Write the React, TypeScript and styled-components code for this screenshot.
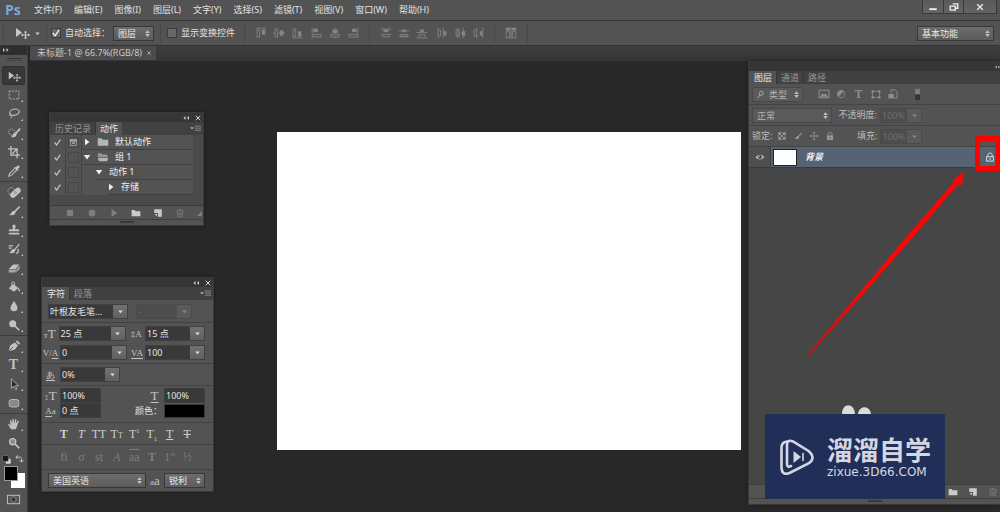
import React from 'react';
import styled, { createGlobalStyle, css } from 'styled-components';

const GlobalStyle = createGlobalStyle`
  * { box-sizing: border-box; }
  body {
    margin: 0;
    background: #282828;
    overflow: hidden;
  }
  body, button, input, select {
    font-family: "Noto Sans", "Noto Sans CJK SC", sans-serif;
    font-size: 9px;
    line-height: 12px;
  }
  body { color: #e2e2e2; }
  button {
    padding: 0;
    border: 0;
    background: none;
    color: inherit;
  }
`;

/* ---------- icons ---------- */

const line = { fill: 'none', stroke: 'currentColor', strokeWidth: 1 };

const glyphs: Record<string, React.ReactNode> = {
  move: <><path d="M2 3v9l6-4.5z" fill="currentColor" /><path d="M11.5 6v8M7.500 10h8M10.500 7.500l1-1.500 1 1.500M10.500 12.500l1 1.500 1-1.500M9 9l-1.500 1L9 11M14 9l1.500 1-1.500 1" {...line} /></>,
  marquee: <rect x="2.500" y="3.500" width="11" height="9" strokeDasharray="2 1.500" {...line} />,
  lasso: <><ellipse cx="8.500" cy="6" rx="5.500" ry="3.500" transform="rotate(-12 8.500 6)" {...line} strokeWidth="1.300" /><path d="M4 8c-1.500.5-1.500 2 0 2s1.500 1.500.5 3" {...line} /></>,
  quick: <><circle cx="5.500" cy="7" r="3.500" strokeDasharray="1.500 1.200" {...line} /><path d="M15 3L9.500 9" {...line} strokeWidth="2" /><path d="M10 8c-2-.5-3 1-4 3.500-.5 1-1.500 1-1.500 1 3 1 6.500.2 6.500-3z" fill="currentColor" /></>,
  crop: <path d="M4.500 1v10.500H15M1 4.500h10.500V15M6 10l5-5" {...line} strokeWidth="1.500" />,
  dropper: <><path d="M9 5L3 11l-1 3 3-1 6-6" {...line} strokeWidth="1.200" /><path d="M8 4l4 4 1-1-1-1c2-1 3-3 2-4s-3 0-4 2L9 3z" fill="currentColor" /></>,
  heal: <><circle cx="5" cy="7" r="4" strokeDasharray="1.500 1.200" {...line} /><rect x="2.500" y="5.700" width="14" height="6.400" rx="3" transform="rotate(-42 9.500 8.700)" fill="currentColor" /><path d="M7.500 9l3-2M8.500 10.500l3-2" stroke="#777" strokeWidth=".8" /></>,
  brush: <><path d="M14.500 3L8.500 9" {...line} strokeWidth="1.800" /><path d="M8.500 8C6 7.500 5 9.500 4.500 11c-.4 1-2 1.200-2.500 1.200 3 1.500 7.500 1 7.800-2.700z" fill="currentColor" /></>,
  stamp: <path d="M6.500 2.500a2 2 0 0 1 3 0c1 1.500-.5 3-.5 4.500h4c1 0 1 2.500 1 2.500H2S2 7 3 7h4c0-1.500-1.500-3-.5-4.500zM2 11h12v2H2z" fill="currentColor" />,
  history: <><path d="M2 4.500h5M2 7h3" {...line} strokeWidth="1.500" /><path d="M14 2.500L8.500 9M12 8c2 2 1 5-2 5" {...line} strokeWidth="1.500" /><path d="M8.500 8c-2.500-.5-3.500 1-4 2.500-.5 1-1.500 1.500-2.500 1.500 3 1.500 7.500 1 7.500-2.500z" fill="currentColor" /></>,
  eraser: <><path d="M7 4h7l-4 5H2z" fill="currentColor" /><path d="M2 9.700h8V13H2zM10.800 9.500L14.500 5v3.500L10.800 13z" fill="currentColor" opacity=".75" /></>,
  bucket: <><path d="M7 4.500l6 4.500-5 4.500-6-4z" fill="currentColor" /><path d="M5.500 8V3.500c0-2 3-2 3 0V7" {...line} /><path d="M13 9c2 1 2 3 1.500 4.500C13 13 13 11 12.500 9.500z" fill="currentColor" /></>,
  blur: <path d="M8 2c1 3 4 5 4 8a4 4 0 0 1-8 0c0-3 3-5 4-8z" fill="currentColor" />,
  dodge: <><circle cx="6.500" cy="6.500" r="4" fill="currentColor" /><path d="M9 9l5 5" {...line} strokeWidth="1.800" /></>,
  pen: <><path d="M2 14l1.500-6.500L9 4l3.500 3.500L9 12z" fill="currentColor" /><path d="M2 14l5-5" stroke="#535353" /><path d="M10 3l3.500 3.500L15 5l-3.500-3.500z" fill="currentColor" /></>,
  pointer: <path d="M5 2v11l3-2.500 1.700 4 1.600-.7-1.700-3.800H13z" fill="#2b2b2b" stroke="currentColor" strokeWidth=".9" />,
  shape: <rect x="2.500" y="4" width="11" height="8.500" rx="2.500" fill="#888" stroke="currentColor" />,
  hand: <path d="M4.500 14C3 11.500 1.500 9.500 1.500 8.500s1.200-1 2 .3L4.500 10 3.300 4.500c0-1.300 1.200-1.300 1.600 0L6 7.500 6 3c.1-1.300 1.600-1.300 1.700 0l.3 4.300L9.200 3c.4-1.300 1.700-.9 1.500.3L10 7.900l2-3.200c.8-1 1.900-.3 1.400.8-1.300 2.500-1.700 5.500-3.400 8.500z" fill="currentColor" />,
  zoom: <><circle cx="6.500" cy="6.500" r="3.500" fill="#8a8a8a" stroke="currentColor" strokeWidth="1.500" /><path d="M9 9l5 5" {...line} strokeWidth="2" /></>,
  mask: <><rect x="1.500" y="3.500" width="13" height="9" {...line} /><circle cx="8" cy="8" r="2.700" fill="#333" stroke="currentColor" strokeDasharray="1.300 .8" /></>,
  swapDefault: <><rect x="7" y="7" width="7" height="7" fill="#ddd" /><rect x="2.500" y="2.500" width="8" height="8" fill="#151515" stroke="#777" /></>,
  swap: <path d="M3 5h6c2 0 3 1 3 3v5M6 2L3 5l3 3M9 10l3 3 3-3" {...line} strokeWidth="1.500" />,
  alignTop: <><path d="M2 2.500h12" {...line} /><rect x="3.500" y="4.500" width="3" height="8" {...line} /><rect x="9" y="4" width="4" height="6" fill="currentColor" /></>,
  alignMiddle: <><path d="M1 8h14" {...line} /><rect x="3.500" y="3.500" width="3" height="9" fill="#535353" stroke="currentColor" /><rect x="9" y="5" width="4" height="6" fill="currentColor" /></>,
  alignBottom: <><path d="M2 13.500h12" {...line} /><rect x="3.500" y="3.500" width="3" height="8" {...line} /><rect x="9" y="6" width="4" height="6" fill="currentColor" /></>,
  alignLeft: <><path d="M2.500 2v12" {...line} /><rect x="4" y="3" width="5" height="4" fill="currentColor" /><rect x="4.500" y="9.500" width="8" height="3" {...line} /></>,
  alignCenter: <><path d="M8 2v12" {...line} /><rect x="5" y="4" width="6" height="4" fill="currentColor" /><rect x="3.500" y="9.500" width="9" height="3" fill="#535353" stroke="currentColor" /></>,
  alignRight: <><path d="M13.500 2v12" {...line} /><rect x="7" y="3" width="5" height="4" fill="currentColor" /><rect x="3.500" y="9.500" width="8" height="3" {...line} /></>,
  distTop: <><path d="M2 3.500h12M2 9.500h12" {...line} /><rect x="5" y="4" width="6" height="3" fill="currentColor" /><path d="M4.500 9.500v3h7v-3" {...line} /></>,
  distMiddle: <><path d="M2 5.500h12M2 11.500h12" {...line} /><rect x="6" y="4" width="4" height="3" fill="currentColor" /><rect x="4.500" y="9.500" width="7" height="3" {...line} /></>,
  distBottom: <><path d="M2 7.500h12M2 13.500h12" {...line} /><rect x="6" y="4" width="4" height="3" fill="currentColor" /><path d="M4.500 13v-3h7v3" {...line} /></>,
  distLeft: <><path d="M3.500 2v12M9.500 2v12" {...line} /><path d="M3.500 4.500h3v7h-3" {...line} /><rect x="10" y="6" width="3" height="5" fill="currentColor" /></>,
  distCenter: <><path d="M5.500 2v12M11.500 2v12" {...line} /><rect x="3.500" y="4.500" width="4" height="7" {...line} /><rect x="10" y="6" width="4" height="5" fill="currentColor" /></>,
  distRight: <><path d="M6.500 2v12M13.500 2v12" {...line} /><path d="M6.500 4.500h-3v7h3" {...line} /><rect x="10" y="6" width="3" height="5" fill="currentColor" /></>,
  autoAlign: <><rect x="2.500" y="6.500" width="4" height="7" {...line} /><rect x="9.500" y="6.500" width="4" height="7" {...line} /><path d="M2 2h5v3H2zM9 2h5v3H9z" fill="currentColor" /><path d="M8 1v14" {...line} /></>,
  down: <path d="M4 6h8l-4 5z" fill="currentColor" />,
  upDown: <path d="M4 7h8L8 2zM4 9h8l-4 5z" fill="currentColor" />,
  triRight: <path d="M4 1.500v13L13 8z" fill="currentColor" />,
  triDown: <path d="M1.500 4h13L8 13z" fill="currentColor" />,
  expand: <path d="M2 4l4 4-4 4zM9 4l4 4-4 4z" fill="currentColor" />,
  collapse: <path d="M7 4L3 8l4 4zM14 4l-4 4 4 4z" fill="currentColor" />,
  close: <path d="M3.500 3.500l9 9M12.500 3.500l-9 9" {...line} strokeWidth="2" />,
  menu: <><path d="M0 6h6L3 9.500z" fill="currentColor" /><path d="M7 4.500h9M7 7.500h9M7 10.500h9" {...line} /></>,
  check: <path d="M3 8l3.500 4.500L13 3" {...line} strokeWidth="2.200" />,
  dialog: <><rect x="2.500" y="2.500" width="11" height="11" {...line} /><path d="M2.500 5h11M5.500 9h5" {...line} strokeWidth="2" /></>,
  folder: <path d="M1 3h5l1.500 2H15v8H1z" fill="currentColor" />,
  folderOpen: <><path d="M1 8V3h5l1.500 1.500H14V8z" fill="currentColor" opacity=".7" /><path d="M1 9h14l-1.500 4.500h-11z" fill="currentColor" /></>,
  stop: <rect x="3" y="3" width="10" height="10" fill="currentColor" />,
  record: <circle cx="8" cy="8" r="5.500" fill="currentColor" />,
  newItem: <><path d="M2 2h12v12H8V8H2z" fill="currentColor" /><path d="M2.500 9.500h4v4z" fill="currentColor" /></>,
  trash: <><path d="M2 4.500h12M6 4V2.500h4V4M3.500 5l.8 9h7.400l.8-9M6.300 7v5M8 7v5M9.700 7v5" {...line} strokeWidth="1.200" /></>,
  grip: <path d="M14 4v10H4z" fill="currentColor" />,
  search: <><circle cx="9.500" cy="6" r="3.500" {...line} strokeWidth="1.500" /><path d="M7 8.500L3 14" {...line} strokeWidth="1.700" /></>,
  image: <><rect x="1.500" y="3" width="13" height="10" {...line} strokeWidth="1.400" /><path d="M3 11.500l3-5 2 2.500 2-2 3 4.500z" fill="currentColor" /></>,
  adjust: <><circle cx="8" cy="8" r="5" {...line} /><path d="M4.500 11.500a5 5 0 0 1 7-7z" fill="currentColor" /></>,
  frame: <><rect x="3.500" y="4.500" width="9" height="8" {...line} /><path d="M2 3h3v3H2zM11 3h3v3h-3zM2 11h3v3H2zM11 11h3v3h-3z" fill="currentColor" /></>,
  smart: <><path d="M5.500 7V2.500h5l3 3v8H9" {...line} strokeWidth="1.300" /><rect x="2" y="8" width="7" height="6" fill="currentColor" /></>,
  toggle: <><rect x="5" y="1" width="6" height="7" fill="#7d7d7d" /><rect x="5" y="8" width="6" height="7" fill="#333" /></>,
  pixels: <><rect x="2.500" y="2.500" width="11" height="11" {...line} /><path d="M3 3h3.500v3.500H3zM9.500 3H13v3.500H9.500zM6.500 6.500h3v3h-3zM3 9.500h3.500V13H3zM9.500 9.500H13V13H9.500z" fill="currentColor" /></>,
  cross: <path d="M8 1.500v13M1.500 8h13M6 3.500l2-2 2 2M6 12.500l2 2 2-2M3.500 6l-2 2 2 2M12.500 6l2 2-2 2" {...line} strokeWidth="1.300" />,
  lock: <><rect x="3" y="7" width="10" height="7.500" fill="currentColor" /><path d="M5 7V4.500c0-3.500 6-3.500 6 0V7" {...line} strokeWidth="1.600" /><path d="M8 9.500v2.500" stroke="#444" strokeWidth="1.500" /></>,
  lockOutline: <><rect x="2.500" y="7.500" width="11" height="7" {...line} strokeWidth="1.600" /><path d="M4.500 7.500V5c0-4.500 7-4.500 7 0v2.500" {...line} strokeWidth="1.600" /><path d="M8 9.500v3" {...line} strokeWidth="2" /></>,
  eye: <><path d="M1 8.500C4 3 12 3 15 8.500 12 13 4 13 1 8.500z" fill="currentColor" /><circle cx="8" cy="7.800" r="3" fill="#424242" /><circle cx="7.200" cy="7" r="1" fill="currentColor" /></>,
  minimize: <path d="M2 10h12v3H2z" fill="currentColor" />,
  restore: <path d="M6 3h8v7h-4M2 6.500h8v6.500H2z" {...line} strokeWidth="2.200" />,
};

const Svg = styled.svg`
  display: block;
  flex: none;
`;

function Icon({ name, size = 12 }: { name: string; size?: number }) {
  return <Svg width={size} height={size} viewBox="0 0 16 16" aria-hidden="true">{glyphs[name]}</Svg>;
}

/* ---------- shared controls ---------- */

const raised = css`
  background: linear-gradient(#6c6c6c, #5c5c5c);
  border: 1px solid #383838;
`;

const SelectBox = styled.span<{ $width: number; $dim?: boolean }>`
  display: flex;
  align-items: center;
  flex: none;
  width: ${p => p.$width}px;
  height: 15px;
  ${raised}
  ${p => p.$dim && css`
    background: #5a5a5a;
    border-color: #484848;
  `}
  color: ${p => (p.$dim ? '#b4b4b4' : '#e8e8e8')};
  > svg { margin: 0 0 0 3px; }
  > svg:last-child { margin: 0 1px 0 0; color: #c4c4c4; }
`;

const NativeSelect = styled.select`
  appearance: none;
  flex: 1;
  min-width: 0;
  height: 13px;
  padding: 0 0 0 4px;
  border: 0;
  background: transparent;
  color: inherit;
  line-height: 13px;
`;

function Select({ label, value, width, dim, icon }: { label: string; value: string; width: number; dim?: boolean; icon?: string }) {
  return (
    <SelectBox $width={width} $dim={dim}>
      {icon && <Icon name={icon} size={9} />}
      <NativeSelect aria-label={label}><option>{value}</option></NativeSelect>
      <Icon name="upDown" size={9} />
    </SelectBox>
  );
}

const Combo = styled.span<{ $width: number; $disabled?: boolean }>`
  display: flex;
  flex: none;
  width: ${p => p.$width}px;
  height: 15px;
  border: 1px solid ${p => (p.$disabled ? '#4a4a4a' : '#404040')};
  background: ${p => (p.$disabled ? '#4d4d4d' : '#393939')};
  color: ${p => (p.$disabled ? '#6e6e6e' : '#e6e6e6')};
`;

const ComboInput = styled.input`
  flex: 1;
  min-width: 0;
  width: 0;
  height: 13px;
  padding: 0 1px;
  border: 0;
  background: transparent;
  color: inherit;
`;

const ComboButton = styled.button<{ $disabled?: boolean }>`
  display: flex;
  align-items: center;
  justify-content: center;
  width: 14px;
  background: ${p => (p.$disabled ? '#5a5a5a' : 'linear-gradient(#717171, #606060)')};
  color: ${p => (p.$disabled ? '#8a8a8a' : '#e0e0e0')};
`;

interface FieldProps { id: string; label?: string; value: string; width: number; disabled?: boolean; plain?: boolean }

function Field({ id, label, value, width, disabled, plain }: FieldProps) {
  return (
    <Combo $width={width} $disabled={disabled}>
      <ComboInput id={id} aria-label={label} defaultValue={value} readOnly={disabled} />
      {!plain && (
        <ComboButton $disabled={disabled} aria-label={`${label ?? value} ▾`}><Icon name="down" size={9} /></ComboButton>
      )}
    </Combo>
  );
}

/* ---------- application frame ---------- */

const Frame = styled.div`
  display: flex;
  flex-direction: column;
  min-height: 100vh;
`;

const MenuBar = styled.header`
  display: flex;
  align-items: center;
  height: 21px;
  background: #535353;
  border-bottom: 1px solid #383838;
`;

const Logo = styled.span`
  width: 34px;
  padding-left: 5px;
  font: bold 14px/20px "Open Sans", sans-serif;
  color: #7ba7d9;
`;

const MenuList = styled.nav`
  display: flex;
  flex: 1;
  gap: 12px;
`;

const WindowButtons = styled.div`
  display: flex;
  align-self: flex-start;
  margin-right: 3px;
  border: 1px solid #3a3a3a;
  border-top: 0;
`;

const WindowButton = styled.button<{ $wide?: boolean }>`
  display: flex;
  align-items: center;
  justify-content: center;
  width: ${p => (p.$wide ? 33 : 20)}px;
  height: 13px;
  background: linear-gradient(#5a5a5a, #646464);
  color: #f0f0f0;
  & + & { border-left: 1px solid #3a3a3a; }
`;

const OptionsBar = styled.div`
  display: flex;
  align-items: center;
  height: 25px;
  padding: 0 6px 0 3px;
  background: #535353;
  border-bottom: 1px solid #333;
`;

const Divider = styled.i<{ $gap?: number }>`
  flex: none;
  width: 1px;
  height: 20px;
  margin: 0 ${p => p.$gap ?? 6}px;
  background: #484848;
`;

const MoveButton = styled.button`
  display: flex;
  align-items: center;
  gap: 3px;
  margin-left: 10px;
  color: #c8c8c8;
`;

const CheckLabel = styled.label`
  display: flex;
  align-items: center;
  gap: 4px;
  margin-right: 3px;
`;

const CheckBox = styled.input`
  appearance: none;
  width: 10px;
  height: 10px;
  margin: 0;
  border: 1px solid #3c3c3c;
  background: #686868;
`;

const CheckWrap = styled.span`
  display: grid;
  > * { grid-area: 1 / 1; }
  > svg { pointer-events: none; color: #f0f0f0; }
`;

const AlignGroup = styled.div`
  display: flex;
  gap: 4px;
  padding: 0 3px;
  color: #858585;
`;

const Spacer = styled.span`
  flex: 1;
`;

const Workspace = styled.div`
  display: flex;
  flex: 1;
`;

const ToolColumn = styled.aside`
  display: flex;
  flex-direction: column;
  width: 28px;
  margin-right: 2px;
  background: #535353;
  border-right: 1px solid #3c3c3c;
`;

const ToolHeader = styled.div`
  height: 9px;
  padding-left: 2px;
  background: #2e2e2e;
  color: #c8c8c8;
`;

const ToolGrip = styled.div`
  width: 15px;
  height: 3px;
  margin: 3px 0 5px 7px;
  border-top: 1px solid #363636;
  border-bottom: 1px solid #444;
`;

const ToolRule = styled.hr`
  width: 100%;
  height: 1px;
  margin: 1px 0 0;
  border: 0;
  background: #3c3c3c;
`;

const ToolButton = styled.button<{ $active?: boolean; $flyout?: boolean }>`
  display: flex;
  align-items: center;
  justify-content: center;
  position: relative;
  width: 23px;
  height: 19px;
  margin-left: 2px;
  color: #c2c2c2;
  font: bold 14px/19px "Liberation Serif", serif;
  ${p => p.$active && css`
    background: #383838;
    border-radius: 2px;
    border: 1px solid #303030;
  `}
  ${p => p.$flyout && css`
    &::after {
      content: "";
      position: absolute;
      right: 2px;
      bottom: 2px;
      border: 1px solid #d0d0d0;
      border-top-color: transparent;
      border-left-color: transparent;
    }
  `}
`;

const SwatchMini = styled.div`
  display: flex;
  justify-content: space-between;
  padding: 2px 3px 0 1px;
  color: #c6c6c6;
`;

const Swatches = styled.div`
  display: grid;
  grid-template: 7px 8px 7px / 7px 7px 7px;
  margin: 1px 0 2px 4px;
`;

const Swatch = styled.button<{ $front?: boolean }>`
  grid-area: ${p => (p.$front ? '1 / 1 / 3 / 3' : '2 / 2 / 4 / 4')};
  background: ${p => (p.$front ? '#000' : '#fff')};
  ${p => p.$front && 'border: 1px solid #9a9a9a;'}
`;

const Stage = styled.main`
  position: relative;
  flex: 1;
  min-width: 0;
  display: flex;
  flex-direction: column;
`;

const TabStrip = styled.div`
  height: 15px;
  background: linear-gradient(#3e3e3e, #343434);
`;

const DocTab = styled.div`
  display: inline-flex;
  align-items: center;
  gap: 4px;
  height: 14px;
  padding: 0 4px 0 7px;
  background: #4c4c4c;
  color: #c8c8c8;
`;

const StageBody = styled.div`
  display: flex;
  align-items: flex-start;
  flex: 1;
`;

const ArtArea = styled.div`
  flex: 1;
  padding: 71px 7px 0 247px;
`;

const Artboard = styled.div`
  aspect-ratio: 464 / 318;
  background: #fff;
`;

/* ---------- panels ---------- */

const PanelFrame = styled.section`
  display: flex;
  flex-direction: column;
  background: #535353;
  border: 1px solid #3a3a3a;
  box-shadow: 0 0 3px #1c1c1c;
`;

const FloatingPanel = styled(PanelFrame)<{ $left: number; $top: number; $width: number }>`
  position: absolute;
  left: ${p => p.$left}px;
  top: ${p => p.$top}px;
  width: ${p => p.$width}px;
`;

const PanelHeader = styled.div`
  display: flex;
  align-items: center;
  justify-content: flex-end;
  gap: 4px;
  height: 9px;
  padding-right: 1px;
  background: #363636;
  color: #d0d0d0;
`;

const PanelTabs = styled.div`
  display: flex;
  align-items: center;
  height: 13px;
  padding-right: 2px;
  background: #414141;
  color: #a8a8a8;
`;

const PanelTab = styled.button<{ $active?: boolean }>`
  height: 13px;
  padding: 0 4px 0 5px;
  color: ${p => (p.$active ? '#e8e8e8' : '#979797')};
  background: ${p => (p.$active ? '#535353' : '#414141')};
  & + & { border-left: 1px solid #363636; padding-left: 4px; }
`;

const PanelFooter = styled.div`
  display: flex;
  align-items: center;
  height: 14px;
  border-top: 1px solid #3c3c3c;
  color: #c4c4c4;
`;

const BottomGrip = styled.div`
  display: flex;
  justify-content: center;
  height: 6px;
  padding-top: 1px;
  border-top: 1px solid #3e3e3e;
  &::after {
    content: "";
    width: 14px;
    height: 2px;
    background: #3a3a3a;
  }
`;

const FooterButton = styled.button<{ $off?: boolean }>`
  color: ${p => (p.$off ? '#7e7e7e' : '#cacaca')};
`;

function PanelChrome({ tabs, active }: { tabs: string[]; active: number }) {
  return (
    <>
      <PanelHeader>
        <button aria-label="折叠"><Icon name="collapse" size={8} /></button>
        <button aria-label="关闭"><Icon name="close" size={8} /></button>
      </PanelHeader>
      <PanelTabs>
        {tabs.map((t, i) => <PanelTab key={t} $active={i === active}>{t}</PanelTab>)}
        <Spacer />
        <button aria-label="面板菜单"><Icon name="menu" size={11} /></button>
      </PanelTabs>
    </>
  );
}

const ActionBody = styled.div`
  height: 70px;
  padding-right: 10px;
  background: #4a4a4a;
`;

const ActionRow = styled.div`
  display: flex;
  align-items: stretch;
  height: 15px;
  background: #535353;
`;

const ActionCell = styled.span`
  display: flex;
  align-items: center;
  justify-content: center;
  width: 16px;
  border-right: 1px solid #434343;
  color: #c6c6c6;
`;

const DialogSlot = styled.button`
  width: 11px;
  height: 11px;
  border: 1px solid #474747;
  color: #c0c0c0;
`;

const ActionName = styled.span<{ $indent: number }>`
  display: flex;
  align-items: center;
  flex: 1;
  gap: 6px;
  margin-left: ${p => p.$indent + 1}px;
  border-bottom: 1px solid #404040;
  color: #f0f0f0;
  > svg + svg { color: #b4b4b4; }
`;

const actions = [
  { name: '默认动作', indent: 0, open: false, folder: 'folder', dialog: true },
  { name: '组 1', indent: 0, open: true, folder: 'folderOpen' },
  { name: '动作 1', indent: 12, open: true },
  { name: '存储', indent: 24, open: false },
];

const actionButtons: [string, string, boolean][] = [
  ['stop', '停止', true], ['record', '记录', true], ['triRight', '播放', true],
  ['folder', '新建组', false], ['newItem', '新建动作', false], ['trash', '删除', true],
];

const ActionTools = styled.div`
  display: flex;
  gap: 12px;
  flex: 1;
  padding-left: 15px;
`;

function ActionsPanel() {
  return (
    <FloatingPanel $left={19} $top={66} $width={155}>
      <PanelChrome tabs={['历史记录', '动作']} active={1} />
      <ActionBody>
        {actions.map(a => (
          <ActionRow key={a.name}>
            <ActionCell><Icon name="check" size={9} /></ActionCell>
            <ActionCell>
              <DialogSlot aria-label="切换对话">{a.dialog && <Icon name="dialog" size={9} />}</DialogSlot>
            </ActionCell>
            <ActionName $indent={a.indent}>
              <Icon name={a.open ? 'triDown' : 'triRight'} size={8} />
              {a.folder && <Icon name={a.folder} size={12} />}
              {a.name}
            </ActionName>
          </ActionRow>
        ))}
      </ActionBody>
      <PanelFooter>
        <ActionTools>
          {actionButtons.map(([icon, label, off]) => (
            <FooterButton key={icon} $off={off} aria-label={label}><Icon name={icon} size={10} /></FooterButton>
          ))}
        </ActionTools>
        <FooterButton $off aria-label="调整大小"><Icon name="grip" size={8} /></FooterButton>
      </PanelFooter>
      <BottomGrip />
    </FloatingPanel>
  );
}

const CharSection = styled.div<{ $first?: boolean }>`
  display: flex;
  flex-direction: column;
  gap: 4px;
  padding: 3px 8px 3px 1px;
  border-top: 1px solid ${p => (p.$first ? '#535353' : '#424242')};
`;

const CharRow = styled.div<{ $inset?: boolean }>`
  display: flex;
  align-items: center;
  gap: 2px;
  padding-left: ${p => (p.$inset ? 5 : 0)}px;
`;

const GlyphLabel = styled.label`
  display: flex;
  align-items: baseline;
  justify-content: center;
  width: 15px;
  height: 14px;
  font: 13px/14px "Liberation Serif", serif;
  color: #c4c4c4;
  white-space: nowrap;
  small { font-size: 9px; }
  u { text-underline-offset: 2px; }
`;

const FilterGlyph = styled.span`
  width: 13px;
  text-align: center;
  font: bold 12px/13px "Liberation Serif", serif;
`;

const ColorSwatch = styled.button`
  width: 41px;
  height: 14px;
  background: #000;
  border: 1px solid #3a3a3a;
`;

const TightSection = styled(CharSection)`
  gap: 0;
  padding-top: 2px;
  padding-bottom: 4px;
`;

const StyleRow = styled.div<{ $dim?: boolean }>`
  display: grid;
  grid-template-columns: repeat(8, 1fr);
  height: ${p => (p.$dim ? 25 : 22)}px;
  padding: 0 17px 0 13px;
  border-top: 1px solid #424242;
`;

const StyleButton = styled.button<{ $dim?: boolean; $bold?: boolean; $italic?: boolean }>`
  font: 12px/20px "Liberation Serif", serif;
  font-weight: ${p => (p.$bold ? 'bold' : 'normal')};
  font-style: ${p => (p.$italic ? 'italic' : 'normal')};
  color: ${p => (p.$dim ? '#7e7e7e' : '#cecece')};
  white-space: nowrap;
  small { font-size: 8px; line-height: 8px; }
  sup, sub { font-size: 7px; line-height: 7px; }
`;

const Overline = styled.span`
  text-decoration: overline;
`;

function CharacterPanel() {
  return (
    <FloatingPanel $left={11} $top={231} $width={173}>
      <PanelChrome tabs={['字符', '段落']} active={0} />
      <CharSection $first>
        <CharRow $inset>
          <Field id="font" label="字体" value="叶根友毛笔..." width={80} />
          <Spacer />
          <Field id="fontStyle" label="字形" value="-" width={56} disabled />
          <Spacer /><Spacer />
        </CharRow>
      </CharSection>
      <CharSection>
        <CharRow>
          <GlyphLabel htmlFor="size" title="字号"><small>т</small>T</GlyphLabel>
          <Field id="size" value="25 点" width={67} />
          <Spacer />
          <GlyphLabel htmlFor="leading" title="行距"><small>‡A</small></GlyphLabel>
          <Field id="leading" value="15 点" width={60} />
        </CharRow>
        <CharRow>
          <GlyphLabel htmlFor="kerning" title="字距微调"><small>V/<u>A</u></small></GlyphLabel>
          <Field id="kerning" value="0" width={67} />
          <Spacer />
          <GlyphLabel htmlFor="tracking" title="字距"><small><u>VA</u></small></GlyphLabel>
          <Field id="tracking" value="100" width={60} />
        </CharRow>
      </CharSection>
      <CharSection>
        <CharRow>
          <GlyphLabel htmlFor="spacing" title="比例间距"><small><u>あ</u></small></GlyphLabel>
          <Field id="spacing" value="0%" width={60} />
        </CharRow>
      </CharSection>
      <TightSection>
        <CharRow>
          <GlyphLabel htmlFor="vscale" title="垂直缩放"><small>↕</small>T</GlyphLabel>
          <Field id="vscale" value="100%" width={41} plain />
          <Spacer />
          <GlyphLabel htmlFor="hscale" title="水平缩放"><u>T</u></GlyphLabel>
          <Field id="hscale" value="100%" width={41} plain />
        </CharRow>
        <CharRow>
          <GlyphLabel htmlFor="baseline" title="基线偏移"><small><u>A</u>a</small></GlyphLabel>
          <Field id="baseline" value="0 点" width={41} plain />
          <Spacer />
          <label htmlFor="color">颜色：</label>
          <ColorSwatch id="color" />
        </CharRow>
      </TightSection>
      <StyleRow>
        <StyleButton $bold>T</StyleButton>
        <StyleButton $italic>T</StyleButton>
        <StyleButton>TT</StyleButton>
        <StyleButton>T<small>T</small></StyleButton>
        <StyleButton>T<sup>1</sup></StyleButton>
        <StyleButton>T<sub>1</sub></StyleButton>
        <StyleButton><u>T</u></StyleButton>
        <StyleButton><s>T</s></StyleButton>
      </StyleRow>
      <StyleRow $dim>
        <StyleButton $dim>fi</StyleButton>
        <StyleButton $dim $italic>σ</StyleButton>
        <StyleButton $dim>st</StyleButton>
        <StyleButton $dim $italic>A</StyleButton>
        <StyleButton $dim><Overline>aa</Overline></StyleButton>
        <StyleButton $dim $bold>T</StyleButton>
        <StyleButton $dim>1<sup>st</sup></StyleButton>
        <StyleButton $dim>½</StyleButton>
      </StyleRow>
      <CharSection>
        <CharRow $inset>
          <Select label="语言" value="美国英语" width={98} />
          <GlyphLabel as="span"><small>a</small>a</GlyphLabel>
          <Select label="消除锯齿" value="锐利" width={41} />
        </CharRow>
      </CharSection>
    </FloatingPanel>
  );
}

const LayersFrame = styled(PanelFrame)`
  position: relative;
  align-self: stretch;
  width: 252px;
  margin-bottom: 7px;
  border-right: 0;
`;

const LayersHeader = styled(PanelHeader)`
  height: 9px;
  padding: 0;
`;

const LayersRow = styled.div<{ $height: number }>`
  display: flex;
  align-items: center;
  height: ${p => p.$height}px;
  padding-left: 3px;
  border-bottom: 1px solid #434343;
  color: #bcbcbc;
`;

const FilterIcons = styled.div`
  display: flex;
  align-items: center;
  gap: 5px;
  padding: 0 12px 0 15px;
  color: #8e8e8e;
`;

const LockIcons = styled.div`
  display: flex;
  gap: 6px;
  width: 66px;
  padding-left: 5px;
  color: #969696;
`;

const RowLabel = styled.label<{ $width: number }>`
  width: ${p => p.$width}px;
  padding-right: 3px;
  text-align: right;
  color: #bcbcbc;
  white-space: nowrap;
`;

const LayerItem = styled.div`
  display: flex;
  height: 21px;
  background: #566375;
  border-bottom: 1px solid #3a3a3a;
`;

const LayerEye = styled.button`
  display: flex;
  align-items: center;
  justify-content: center;
  width: 22px;
  background: #4f4f4f;
  border-right: 1px solid #3c3c3c;
  color: #b8b8b8;
`;

const Thumb = styled.span`
  align-self: center;
  width: 24px;
  height: 17px;
  margin-left: 2px;
  background: #fff;
  border: 1px solid #222;
`;

const LayerName = styled.span`
  flex: 1;
  align-self: center;
  padding-left: 8px;
  font-style: italic;
  font-weight: bold;
  color: #f2f2f2;
`;

const LayerLock = styled.button`
  padding-right: 5px;
  color: #d4d8de;
`;

const LayerList = styled.div`
  flex: 1;
  background: #464646;
`;

const LayerFooter = styled(PanelFooter)`
  justify-content: flex-end;
  gap: 10px;
  padding-right: 2px;
`;

const Annotation = styled.svg`
  position: absolute;
  right: 0;
  top: 0;
  pointer-events: none;
`;

const Watermark = styled.div`
  position: absolute;
  right: 55px;
  bottom: 5px;
  display: flex;
  align-items: center;
  gap: 12px;
  width: 180px;
  height: 85px;
  padding-left: 14px;
  background: #212f58;
  color: #d4d7e2;
`;

const WatermarkText = styled.div`
  display: flex;
  flex-direction: column;
  strong {
    font-size: 26px;
    line-height: 30px;
    font-weight: bold;
  }
  span {
    font: 12px/14px "DejaVu Sans", sans-serif;
  }
`;

const Bumps = styled.svg`
  position: absolute;
  left: 76px;
  bottom: 100%;
`;

function LayersPanel() {
  return (
    <LayersFrame>
      <LayersHeader><Icon name="collapse" size={6} /></LayersHeader>
      <PanelTabs>
        <PanelTab $active>图层</PanelTab>
        <PanelTab>通道</PanelTab>
        <PanelTab>路径</PanelTab>
      </PanelTabs>
      <LayersRow $height={21}>
        <Select label="滤镜类型" value="类型" width={51} dim icon="search" />
        <FilterIcons>
          {['image', 'adjust'].map(n => <Icon key={n} name={n} size={12} />)}
          <FilterGlyph>T</FilterGlyph>
          {['frame', 'smart'].map(n => <Icon key={n} name={n} size={12} />)}
        </FilterIcons>
        <Icon name="toggle" size={13} />
      </LayersRow>
      <LayersRow $height={21}>
        <Select label="混合模式" value="正常" width={80} dim />
        <RowLabel htmlFor="opacity" $width={48}>不透明度:</RowLabel>
        <Field id="opacity" value="100%" width={42} disabled />
      </LayersRow>
      <LayersRow $height={21}>
        <span>锁定:</span>
        <LockIcons>
          {['pixels', 'brush', 'cross', 'lock'].map(n => <Icon key={n} name={n} size={10} />)}
        </LockIcons>
        <RowLabel htmlFor="fill" $width={42}>填充:</RowLabel>
        <Field id="fill" value="100%" width={42} disabled />
      </LayersRow>
      <LayerItem>
        <LayerEye aria-label="可见性"><Icon name="eye" size={10} /></LayerEye>
        <Thumb />
        <LayerName>背景</LayerName>
        <LayerLock aria-label="锁定"><Icon name="lockOutline" size={10} /></LayerLock>
      </LayerItem>
      <LayerList />
      <LayerFooter>
        <FooterButton aria-label="新建组"><Icon name="folder" size={10} /></FooterButton>
        <FooterButton aria-label="新建图层"><Icon name="newItem" size={10} /></FooterButton>
        <FooterButton $off aria-label="删除图层"><Icon name="trash" size={10} /></FooterButton>
      </LayerFooter>
      <BottomGrip />
      <Annotation width="200" height="310" viewBox="0 0 200 310">
        <defs>
          <linearGradient id="fade" x1="0" y1="1" x2="1" y2="0">
            <stop offset="0" stopColor="#b01c1c" />
            <stop offset=".35" stopColor="#fb0505" />
          </linearGradient>
        </defs>
        <rect x="177.500" y="76.500" width="20.500" height="30" fill="none" stroke="#fd0000" strokeWidth="5" />
        <path d="M164.500 109.500L152.500 118l1.500 2L110 170.500 7 293l2 1L114 174l44-51.500 3.500 1.500z" fill="url(#fade)" />
      </Annotation>
      <Watermark>
        <Bumps width="32" height="9" viewBox="0 0 32 9">
          <path d="M1 9c0-11 12-12 13 0zM17 9c1-9 12-9 13 0z" fill="#d9dcd9" />
        </Bumps>
        <Svg width="36" height="36" viewBox="0 0 36 36" fill="none" stroke="#d4d7e2" strokeWidth="2.600" strokeLinecap="round">
          <path d="M8 2.500Q2.500 3 2.500 9v19q0 9 8 6l19-9.500q8-5.500 0-12.500L14 2.500Q8 0 8 6v19q0 4 4 2" />
          <path d="M14.500 12v12l7.500-6z" fill="#d4d7e2" stroke="none" />
          <path d="M24 14.500v7" strokeWidth="1.600" />
        </Svg>
        <WatermarkText>
          <strong>溜溜自学</strong>
          <span>zixue.3D66.COM</span>
        </WatermarkText>
      </Watermark>
    </LayersFrame>
  );
}

const toolGroups: string[][] = [
  ['move', 'marquee', 'lasso', 'quick', 'crop', 'dropper'],
  ['heal', 'brush', 'stamp', 'history', 'eraser', 'bucket', 'blur', 'dodge'],
  ['pen', 'type', 'pointer', 'shape'],
  ['hand', 'zoom'],
];

const alignGroups: string[][] = [
  ['alignTop', 'alignMiddle', 'alignBottom'],
  ['alignLeft', 'alignCenter', 'alignRight'],
  ['distTop', 'distMiddle', 'distBottom'],
  ['distLeft', 'distCenter', 'distRight'],
  ['autoAlign'],
];

const menus = ['文件(F)', '编辑(E)', '图像(I)', '图层(L)', '文字(Y)', '选择(S)', '滤镜(T)', '视图(V)', '窗口(W)', '帮助(H)'];

export default function App() {
  return (
    <Frame>
      <GlobalStyle />
      <MenuBar>
        <Logo>Ps</Logo>
        <MenuList>{menus.map(m => <button key={m}>{m}</button>)}</MenuList>
        <WindowButtons>
          <WindowButton aria-label="最小化"><Icon name="minimize" size={10} /></WindowButton>
          <WindowButton aria-label="还原"><Icon name="restore" size={10} /></WindowButton>
          <WindowButton $wide aria-label="关闭"><Icon name="close" size={10} /></WindowButton>
        </WindowButtons>
      </MenuBar>
      <OptionsBar>
        <Divider $gap={0} />
        <MoveButton aria-label="移动工具"><Icon name="move" size={16} /><Icon name="down" size={9} /></MoveButton>
        <Divider $gap={4} />
        <CheckLabel>
          <CheckWrap><CheckBox type="checkbox" defaultChecked /><Icon name="check" size={10} /></CheckWrap>
          自动选择：
        </CheckLabel>
        <Select label="自动选择" value="图层" width={41} />
        <Divider />
        <CheckLabel><CheckBox type="checkbox" />显示变换控件</CheckLabel>
        <Divider />
        {alignGroups.map((g, i) => (
          <React.Fragment key={g[0]}>
            {(i === 2 || i === 4) && <Divider />}
            <AlignGroup>{g.map(n => <button key={n} aria-label={n}><Icon name={n} size={14} /></button>)}</AlignGroup>
          </React.Fragment>
        ))}
        <Divider />
        <Spacer />
        <Select label="工作区" value="基本功能" width={77} />
      </OptionsBar>
      <Workspace>
        <ToolColumn>
          <ToolHeader><Icon name="expand" size={8} /></ToolHeader>
          <ToolGrip />
          {toolGroups.map((group, g) => (
            <React.Fragment key={g}>
              {g > 0 && <ToolRule />}
              {group.map(t => (
                <ToolButton key={t} aria-label={t} $active={t === 'move'} $flyout={t !== 'move' && t !== 'zoom'}>
                  {t === 'type' ? 'T' : <Icon name={t} size={14} />}
                </ToolButton>
              ))}
            </React.Fragment>
          ))}
          <SwatchMini><Icon name="swapDefault" size={11} /><Icon name="swap" size={10} /></SwatchMini>
          <Swatches>
            <Swatch aria-label="背景色" />
            <Swatch $front aria-label="前景色" />
          </Swatches>
          <ToolButton aria-label="快速蒙版"><Icon name="mask" size={15} /></ToolButton>
        </ToolColumn>
        <Stage>
          <TabStrip>
            <DocTab>未标题-1 @ 66.7%(RGB/8) <button aria-label="关闭文档"><Icon name="close" size={6} /></button></DocTab>
          </TabStrip>
          <StageBody>
            <ArtArea><Artboard /></ArtArea>
            <LayersPanel />
          </StageBody>
          <ActionsPanel />
          <CharacterPanel />
        </Stage>
      </Workspace>
    </Frame>
  );
}
